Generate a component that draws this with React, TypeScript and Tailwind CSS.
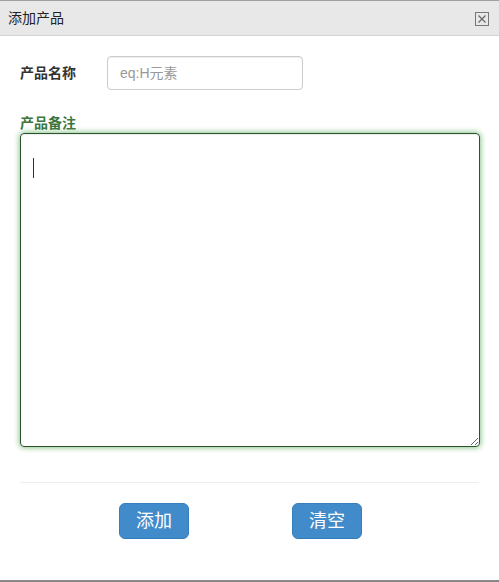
export default function App() {
  return (
    <div className="w-[499px] h-[582px] bg-white flex flex-col font-['Liberation_Sans','Noto_Sans_CJK_SC',sans-serif] text-[#333] overflow-hidden">
      {/* Title bar */}
      <div className="h-[36px] shrink-0 border-t border-b border-t-[#a0a0a0] border-b-[#d4d4d4] bg-[#e8e8e8] flex items-center justify-between pl-[8px] pr-[10px]">
        <span className="text-[14px] leading-none text-[#222]">添加产品</span>
        <svg width="14" height="14" viewBox="0 0 14 14" className="mt-[1px]">
          <rect x="0.5" y="0.5" width="13" height="13" fill="none" stroke="#777" strokeWidth="1" />
          <path d="M3.5 3.5 L10.5 10.5 M10.5 3.5 L3.5 10.5" stroke="#666" strokeWidth="1.2" />
        </svg>
      </div>

      {/* Body */}
      <div className="flex-1 px-[20px]">
        <div className="flex items-center mt-[20px]">
          <label className="w-[87px] text-[14px] font-bold">产品名称</label>
          <input
            placeholder="eq:H元素"
            className="w-[196px] h-[34px] px-[12px] text-[14px] border border-[#ccc] rounded-[4px] placeholder:text-[#999] outline-none shadow-[inset_0_1px_1px_rgba(0,0,0,0.075)]"
          />
        </div>

        <div className="mt-[24px] text-[14px] font-bold text-[#3c763d] leading-[18px]">产品备注</div>
        <div className="mt-[1px] relative">
          <textarea
            className="block w-[460px] h-[314px] border border-[#2b542c] rounded-[4px] outline-none resize-y shadow-[inset_0_1px_1px_rgba(0,0,0,0.075),0_0_6px_#67b168]"
          />
          <div className="absolute left-[13px] top-[25px] w-px h-[20px] bg-[#333]" />
        </div>

        <div className="mt-[35px] border-t border-[#eee]" />

        <div className="flex mt-[20px] pl-[99px] gap-[103px]">
          <button className="w-[70px] h-[36px] rounded-[6px] bg-[#428bca] border border-[#357ebd] text-white text-[18px]">添加</button>
          <button className="w-[70px] h-[36px] rounded-[6px] bg-[#428bca] border border-[#357ebd] text-white text-[18px]">清空</button>
        </div>
      </div>

      <div className="h-[2px] shrink-0 bg-[#888]" />
    </div>
  )
}
